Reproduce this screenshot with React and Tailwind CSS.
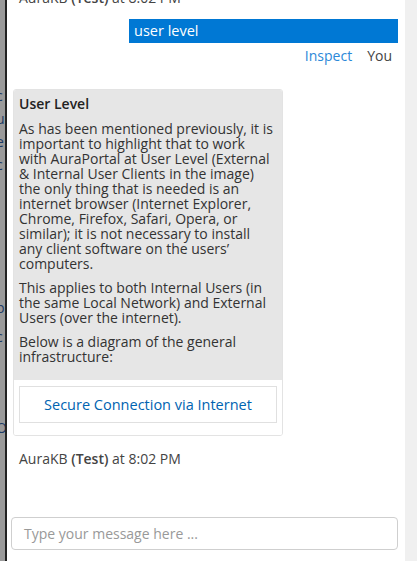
const para1 = [
  'As has been mentioned previously, it is',
  'important to highlight that to work',
  'with AuraPortal at User Level (External',
  '& Internal User Clients in the image)',
  'the only thing that is needed is an',
  'internet browser (Internet Explorer,',
  'Chrome, Firefox, Safari, Opera, or',
  'similar); it is not necessary to install',
  'any client software on the users\u2019',
  'computers.',
];
const para2 = [
  'This applies to both Internal Users (in',
  'the same Local Network) and External',
  'Users (over the internet).',
];
const para3 = ['Below is a diagram of the general', 'infrastructure:'];

function Lines({ lines, className = '' }) {
  return (
    <p className={`whitespace-nowrap leading-[15px] ${className}`}>
      {lines.map((l, i) => (
        <span key={i} className="block">
          {l}
        </span>
      ))}
    </p>
  );
}

export default function App() {
  return (
    <div className="flex h-[561px] w-[417px] overflow-hidden bg-white font-['Open_Sans',sans-serif]">
      {/* page behind the chat */}
      <div className="relative w-[5px] shrink-0 overflow-hidden bg-[#9a9a9a] text-[14px] leading-[15px] text-[#1d3b66]">
        <div className="absolute left-[-4px] top-[88px] flex flex-col gap-[8px]">
          <span>c</span>
          <span>u</span>
          <span>e</span>
          <span>c</span>
        </div>
        <div className="absolute left-[-4px] top-[300px] flex flex-col gap-[14px]">
          <span>p</span>
          <span>c</span>
        </div>
        <div className="absolute left-[-4px] top-[420px]">O</div>
      </div>
      <div className="w-[2px] shrink-0 bg-[#222]" />

      {/* chat panel */}
      <div className="flex w-[398px] shrink-0 flex-col">
        <div className="relative h-[19px]">
          <p className="absolute left-[12px] top-[-13px] text-[14px] text-[#444]">
            AuraKB <span className="font-semibold">(Test)</span> at 8:02 PM
          </p>
        </div>

        <div className="flex flex-col items-end pr-[7px]">
          <div className="flex h-[24px] w-[269px] items-center bg-[#0078d4] px-[5px] text-[14.5px] text-white">
            user level
          </div>
          <div className="mt-[3px] flex gap-[15px] pr-[6px] text-[14px] leading-[20px]">
            <span className="text-[#2b88d8]">Inspect</span>
            <span className="text-[#444]">You</span>
          </div>
        </div>

        <div className="ml-[6px] mt-[23px] w-[270px] overflow-hidden rounded-[3px] border border-[#e3e3e3] text-[14px] text-[#333]">
          <div className="bg-[#e6e6e6] px-[5px] pb-[16px] pt-[6px]">
            <p className="text-[14px] font-semibold leading-[16px] text-[#222]">User Level</p>
            <Lines lines={para1} className="mt-[9px]" />
            <Lines lines={para2} className="mt-[9px]" />
            <Lines lines={para3} className="mt-[9px]" />
          </div>
          <div className="bg-white px-[5px] pb-[12px] pt-[6px]">
            <div className="flex h-[37px] items-center justify-center border border-[#e0e0e0] text-[14.5px] text-[#0063b1]">
              Secure Connection via Internet
            </div>
          </div>
        </div>

        <p className="ml-[12px] mt-[12px] text-[14px] text-[#444]">
          AuraKB <span className="font-semibold">(Test)</span> at 8:02 PM
        </p>

        <div className="flex-1" />
        <div className="mb-[11px] ml-[4px] flex h-[33px] w-[387px] items-center rounded-[4px] border border-[#cfcfcf] px-[12px] text-[14px] text-[#999]">
          Type your message here ...
        </div>
      </div>

      <div className="flex-1 bg-[#f0f0f0]" />
    </div>
  );
}
